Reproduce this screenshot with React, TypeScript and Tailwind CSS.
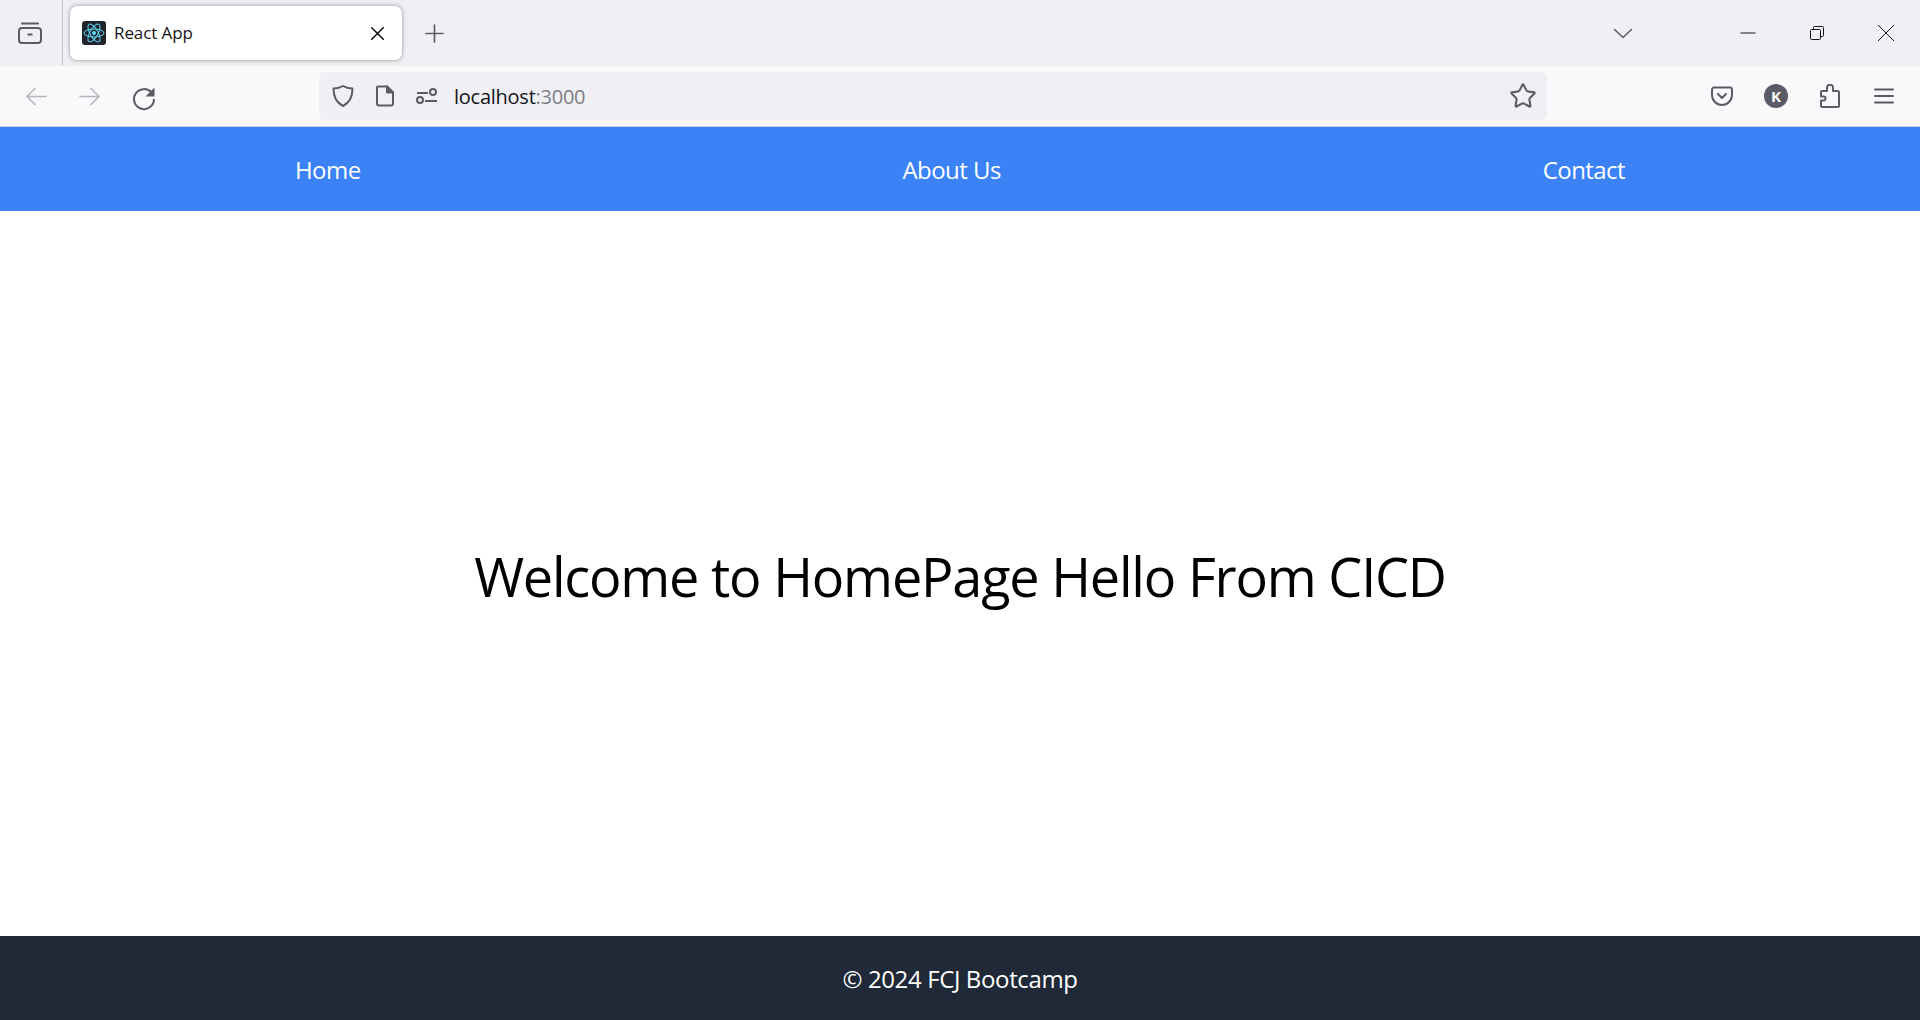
import React from 'react';
import { X, Plus, Star } from 'lucide-react';

const ReactFavicon = () => (
  <svg viewBox="0 0 24 24" className="w-6 h-6 rounded-[3px] bg-[#20232a]">
    <circle cx="12" cy="12" r="2" fill="#61dafb" />
    <g fill="none" stroke="#61dafb" strokeWidth="1">
      <ellipse cx="12" cy="12" rx="10" ry="4" />
      <ellipse cx="12" cy="12" rx="10" ry="4" transform="rotate(60 12 12)" />
      <ellipse cx="12" cy="12" rx="10" ry="4" transform="rotate(120 12 12)" />
    </g>
  </svg>
);

const App: React.FC = () => {
  return (
    <div className="flex flex-col h-[1020px] w-full overflow-hidden bg-white font-['Open_Sans','Noto_Sans',sans-serif]">
      {/* Tab strip */}
      <div className="flex items-center h-[66px] bg-[#f0f0f4] shrink-0">
        <div className="flex items-center justify-center w-[63px] pr-[2px] h-full border-r border-[#c4c4c8]">
          <svg viewBox="0 0 24 24" className="w-6 h-6 text-[#5b5b66]" fill="none" stroke="currentColor" strokeWidth="2">
            <rect x="1" y="7" width="22" height="15" rx="3" />
            <path d="M4 2.500h16" strokeLinecap="round" />
            <path d="M9.500 13.500h5" />
          </svg>
        </div>
        <div className="flex items-center ml-[7px] w-[332px] h-[54px] rounded-[7px] bg-white shadow-[0_0_4px_rgba(0,0,0,0.4)] pl-3 pr-[13px]">
          <ReactFavicon />
          <span className="ml-[8px] text-[17px] tracking-[-0.1px] text-[#15141a]">React App</span>
          <X className="ml-auto w-[23px] h-[23px] text-[#15141a]" strokeWidth={1.7} />
        </div>
        <div className="flex items-center justify-center w-[52px] ml-[6px]">
          <Plus className="w-[29px] h-[29px] text-[#5b5b66]" strokeWidth={1.4} />
        </div>
        <svg viewBox="0 0 20 20" className="ml-auto w-5 h-5 text-[#5b5b66]" fill="none" stroke="currentColor" strokeWidth="1.5">
          <path d="M1.500 6.500l8.500 8 8.500-8" strokeLinecap="round" strokeLinejoin="round" />
        </svg>
        <div className="flex items-center ml-[107px] mr-[26px] gap-[53px]">
          <svg viewBox="0 0 16 16" className="w-4 h-4 text-[#15141a]" fill="none" stroke="currentColor" strokeWidth="1">
            <path d="M0.500 8h15" />
          </svg>
          <svg viewBox="0 0 16 16" className="w-4 h-4 text-[#15141a]" fill="none" stroke="currentColor" strokeWidth="1">
            <rect x="1.500" y="4.500" width="10" height="10" rx="1" />
            <path d="M4.500 4.500v-2a1 1 0 0 1 1-1h8a1 1 0 0 1 1 1v8a1 1 0 0 1-1 1h-2" />
          </svg>
          <svg viewBox="0 0 16 16" className="w-4 h-4 text-[#15141a]" fill="none" stroke="currentColor" strokeWidth="1">
            <path d="M0 0l16 16M16 0L0 16" />
          </svg>
        </div>
      </div>

      {/* Toolbar */}
      <div className="flex items-center h-[60px] bg-[#f9f9fb] border-b border-[#cfcfd8] box-content shrink-0 pl-6 pr-6">
        <svg viewBox="0 0 24 24" className="w-6 h-6 text-[#b5b5bb]" fill="none" stroke="currentColor" strokeWidth="1.6" strokeLinecap="round" strokeLinejoin="round">
          <path d="M22 12.500H3M11 4.500l-8 8 8 8" />
        </svg>
        <svg viewBox="0 0 24 24" className="ml-[30px] w-6 h-6 text-[#b5b5bb]" fill="none" stroke="currentColor" strokeWidth="1.6" strokeLinecap="round" strokeLinejoin="round">
          <path d="M2 12.500h19M13 4.500l8 8-8 8" />
        </svg>
        <svg viewBox="0 -2 24 24" className="ml-[30px] w-6 h-6 overflow-visible text-[#5b5b66]" fill="none" stroke="currentColor" strokeWidth="2">
          <path d="M19.500 6.500A10 10 0 1 0 22 13" />
          <path d="M22.500 1.500v9h-9z" fill="currentColor" stroke="none" />
        </svg>
        <div className="flex items-center ml-[163px] w-[1228px] h-[48px] rounded-[6px] bg-[#f0f0f4] pl-[12px] pr-[10px]">
          <svg viewBox="0 0 24 24" className="w-6 h-6 text-[#5b5b66]" fill="none" stroke="currentColor" strokeWidth="2" strokeLinejoin="round">
            <path d="M12 2c3 1.800 6 2.600 9.500 2.600 0 8.400-2.500 14-9.500 17.400C5 18.600 2.500 13 2.500 4.600 6 4.600 9 3.800 12 2z" />
          </svg>
          <svg viewBox="0 0 20 24" className="ml-[20px] w-5 h-6 text-[#5b5b66]" fill="none" stroke="currentColor" strokeWidth="2" strokeLinejoin="round">
            <path d="M3 2.500h9l6 6V19.500a2 2 0 0 1-2 2H4a2 2 0 0 1-2-2v-16a1 1 0 0 1 1-1z" />
            <path d="M12 2.500v6h6z" fill="currentColor" />
          </svg>
          <svg viewBox="0 0 24 24" className="ml-[20px] w-6 h-6 text-[#5b5b66]" fill="none" stroke="currentColor" strokeWidth="2">
            <path d="M2 9h11M10 17h12" />
            <circle cx="18" cy="8" r="3" />
            <circle cx="5" cy="16" r="3" />
          </svg>
          <span className="ml-[15px] pt-[2px] text-[20px] tracking-[-0.25px] text-[#15141a]">
            localhost<span className="text-[#7e7e87]">:3000</span>
          </span>
          <Star className="ml-auto w-7 h-7 text-[#5b5b66]" strokeWidth={1.75} />
        </div>
        <svg viewBox="0 0 24 24" className="ml-[163px] w-6 h-6 text-[#5b5b66]" fill="none" stroke="currentColor" strokeWidth="2">
          <path d="M4 3.500h16a2 2 0 0 1 2 2V11a10 10 0 0 1-20 0V5.500a2 2 0 0 1 2-2z" />
          <path d="M8 10l4 4 4-4" strokeLinecap="round" strokeLinejoin="round" />
        </svg>
        <div className="ml-[30px] flex items-center justify-center w-6 h-6 rounded-full bg-[#5b5b66] text-white text-[15px] font-bold">K</div>
        <svg viewBox="0 0 24 24" className="ml-[30px] w-6 h-6 text-[#5b5b66]" fill="none" stroke="currentColor" strokeWidth="2" strokeLinejoin="round">
          <path d="M4 23h15.500a1.500 1.500 0 0 0 1.500-1.500V8.500A1.500 1.500 0 0 0 19.500 7H15V4a3 3 0 0 0-6-.5V7H4a1 1 0 0 0-1 1v4.500h2.500a2 2 0 0 1 0 4H3V22a1 1 0 0 0 1 1z" />
        </svg>
        <svg viewBox="0 0 24 24" className="ml-[30px] w-6 h-6 text-[#5b5b66]" fill="none" stroke="currentColor" strokeWidth="2" strokeLinecap="round">
          <path d="M3 5.500h18M3 12h18M3 18.500h18" />
        </svg>
      </div>

      {/* Navbar */}
      <nav className="flex items-center justify-around h-[84px] px-6 pt-[2px] bg-[#3b82f6] text-white text-[24px] tracking-[-0.55px] shrink-0">
        <a>Home</a>
        <a>About Us</a>
        <a>Contact</a>
      </nav>

      {/* Main */}
      <main className="flex flex-1 items-center justify-center pt-[6px]">
        <h1 className="text-[54px] tracking-[-1.2px] text-black">Welcome to HomePage Hello From CICD</h1>
      </main>

      {/* Footer */}
      <footer className="flex items-center justify-center h-[84px] pt-[2px] bg-[#1f2937] text-white text-[24px] tracking-[-0.37px] shrink-0">
        © 2024 FCJ Bootcamp
      </footer>
    </div>
  );
};

export default App;
